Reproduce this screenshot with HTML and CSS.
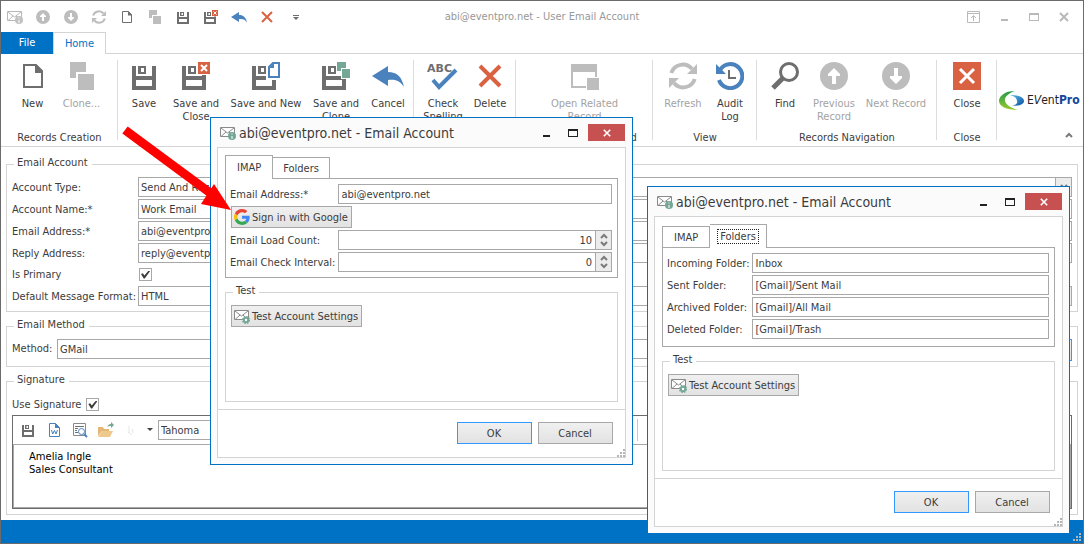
FILE: index.html
```html
<!DOCTYPE html>
<html lang="en">
<head>
  <meta charset="UTF-8" />
  <meta name="viewport" content="width=device-width, initial-scale=1" />
  <title>abi@eventpro.net - User Email Account</title>
  <link rel="stylesheet" href="styles.css">
</head>
<body>

<!-- icon set -->
<svg class="defs" aria-hidden="true">
  <defs>
    <linearGradient id="lg-green" x1="0" y1="0" x2="0" y2="1">
      <stop offset="0" stop-color="#1f9a4c"/><stop offset="1" stop-color="#9ccb2a"/>
    </linearGradient>
    <linearGradient id="lg-blue" x1="0" y1="0" x2="1" y2="1">
      <stop offset="0" stop-color="#5bc0ea"/><stop offset="1" stop-color="#0a4ea2"/>
    </linearGradient>
  </defs>
  <symbol id="i-up" viewBox="0 0 28 28">
    <circle cx="14" cy="14" r="14" fill="#bdbdbd"/>
    <path d="M14 6l6 6v2h-4v8h-4v-8H8v-2z" fill="#fff"/>
  </symbol>
  <symbol id="i-down" viewBox="0 0 28 28">
    <circle cx="14" cy="14" r="14" fill="#bdbdbd"/>
    <path d="M14 22l6-6v-2h-4V6h-4v8H8v2z" fill="#fff"/>
  </symbol>
  <symbol id="i-refresh" viewBox="0 0 28 28">
    <g fill="none" stroke="#bdbdbd" stroke-width="4">
      <path d="M2.300 11A12 12 0 0 1 23 7"/><path d="M25.700 17A12 12 0 0 1 5 21"/>
    </g>
    <path d="M28 2v10H18zM0 26V16h10z" fill="#bdbdbd"/>
  </symbol>
  <symbol id="i-new" viewBox="0 0 28 28">
    <path d="M5 3h12l6 6v16H5z" fill="#fff" stroke="#6e6e6e" stroke-width="2"/>
    <path d="M16 2l8 8v1h-8z" fill="#6e6e6e"/>
  </symbol>
  <symbol id="i-clone" viewBox="0 0 28 28">
    <path d="M2 0h16v10H8v6H2z" fill="#bdbdbd"/><path d="M10 12h16v16H10z" fill="#bdbdbd"/>
  </symbol>
  <symbol id="i-save" viewBox="0 0 28 28">
    <path fill="#6e6e6e" fill-rule="evenodd" d="M2 4h4v10h16V4h4v24H2zM6 18v6h16v-6zM8 4h8v8H8zM11 6v4h3V6z"/>
  </symbol>
  <symbol id="i-saveclose" viewBox="0 0 28 28">
    <path fill="#6e6e6e" fill-rule="evenodd" d="M0 4h4v10h16V4h4v24H0zM4 18v6h16v-6zM6 4h8v8H6zM9 6v4h3V6z"/>
    <path d="M15 0h13v13H15z" fill="#fff"/><path d="M16 0h12v12H16z" fill="#d96243"/>
    <path d="M19 3l6 6m0-6l-6 6" stroke="#fff" stroke-width="2"/>
  </symbol>
  <symbol id="i-savenew" viewBox="0 0 28 28">
    <path fill="#6e6e6e" fill-rule="evenodd" d="M0 4h4v10h16V4h4v24H0zM4 18v6h16v-6zM6 4h8v8H6zM9 6v4h3V6z"/>
    <path d="M14 0h14v18H14z" fill="#fff"/>
    <path d="M21 1h6v14H17V5z" fill="#fff" stroke="#4a82bd" stroke-width="2"/><path d="M22 1v5h-5z" fill="#4a82bd"/>
  </symbol>
  <symbol id="i-saveclone" viewBox="0 0 28 28">
    <path fill="#6e6e6e" fill-rule="evenodd" d="M0 4h4v10h16V4h4v24H0zM4 18v6h16v-6zM6 4h8v8H6zM9 6v4h3V6z"/>
    <path d="M14 0h14v17h-9v-7h-5z" fill="#fff"/>
    <path d="M15 0h9v6h-5v3h-4zM20 7h8v9h-8z" fill="#74a795"/>
  </symbol>
  <symbol id="i-undo" viewBox="0 0 32 28">
    <path d="M0 14L16 4v6c9 0 14 5 16 15-4-6-8-8-16-7v6z" fill="#4a82bd"/>
  </symbol>
  <symbol id="i-delete" viewBox="0 0 28 28">
    <path d="M4 4l20 20M24 4L4 24" stroke="#d96243" stroke-width="4"/>
  </symbol>
  <symbol id="i-related" viewBox="0 0 28 28">
    <path fill="#bdbdbd" fill-rule="evenodd" d="M0 2h26v13h-2v-5H2v14h13v2H0z"/><path d="M16 16h12v12H16z" fill="#bdbdbd"/>
  </symbol>
  <symbol id="i-audit" viewBox="0 0 28 28">
    <path d="M4 8a12 12 0 1 1-1 10" fill="none" stroke="#4a82bd" stroke-width="4"/>
    <path d="M0 2v10h10z" fill="#4a82bd"/><path d="M13 8v8h7" fill="none" stroke="#6e6e6e" stroke-width="2"/>
  </symbol>
  <symbol id="i-find" viewBox="0 0 28 28">
    <circle cx="18" cy="10" r="8.500" fill="#fff" stroke="#6e6e6e" stroke-width="3"/>
    <path d="M12 16L2 26" stroke="#6e6e6e" stroke-width="5"/>
  </symbol>
  <symbol id="i-close" viewBox="0 0 28 28">
    <path d="M0 0h28v28H0z" fill="#d96243"/><path d="M7 7l14 14M21 7L7 21" stroke="#fff" stroke-width="3"/>
  </symbol>
  <symbol id="i-mail" viewBox="0 0 16 16">
    <path d="M.500 2.500h14v9H.500z" fill="#fff" stroke="#8a8a8a"/>
    <path d="M1 3l6.500 5L14 3M1 11.500l5-4.500m8 4.500L9 7" fill="none" stroke="#8a8a8a"/>
    <circle cx="12" cy="11" r="4" fill="#74a795"/><path d="M11.500 8.500h1v1h-1zM11.500 11h1v3h-1z" fill="#fff"/>
  </symbol>
  <symbol id="i-mailgear" viewBox="0 0 16 16">
    <path d="M.500 2.500h14v9H.500z" fill="#fff" stroke="#8a8a8a"/>
    <path d="M1 3l6.500 5L14 3M1 11.500l5-4.500m8 4.500L9 7" fill="none" stroke="#8a8a8a"/>
    <circle cx="12" cy="12" r="2.200" fill="#fff" stroke="#74a795" stroke-width="2"/>
    <circle cx="12" cy="12" r="3.400" fill="none" stroke="#74a795" stroke-width="1.500" stroke-dasharray="1.400 1.270"/>
  </symbol>
  <symbol id="i-google" viewBox="0 0 48 48">
    <path fill="#ea4335" d="M24 9.500c3.540 0 6.710 1.220 9.210 3.600l6.850-6.850C35.900 2.380 30.470 0 24 0 14.620 0 6.510 5.380 2.560 13.220l7.980 6.190C12.430 13.720 17.740 9.500 24 9.500z"/>
    <path fill="#4285f4" d="M46.980 24.550c0-1.570-.15-3.090-.38-4.550H24v9.020h12.940c-.58 2.960-2.260 5.480-4.780 7.180l7.730 6c4.510-4.180 7.090-10.360 7.090-17.650z"/>
    <path fill="#fbbc05" d="M10.530 28.590c-.48-1.450-.76-2.990-.76-4.590s.27-3.140.76-4.590l-7.980-6.190C.92 16.460 0 20.120 0 24s.92 7.540 2.560 10.780z"/>
    <path fill="#34a853" d="M24 48c6.480 0 11.930-2.130 15.890-5.810l-7.730-6c-2.150 1.450-4.920 2.300-8.160 2.300-6.260 0-11.570-4.220-13.470-9.910l-7.980 6.190C6.510 42.620 14.620 48 24 48z"/>
  </symbol>
  <symbol id="i-grip" viewBox="0 0 8 8">
    <path fill="#b5b5b5" d="M6 0h2v2H6zM3 3h2v2H3zM6 3h2v2H6zM0 6h2v2H0zM3 6h2v2H3zM6 6h2v2H6z"/>
  </symbol>
  <symbol id="i-chevup" viewBox="0 0 8 6"><path d="M1 5l3-3 3 3" fill="none" stroke="#7a7a7a" stroke-width="2"/></symbol>
  <symbol id="i-chevdown" viewBox="0 0 8 6"><path d="M1 1l3 3 3-3" fill="none" stroke="#7a7a7a" stroke-width="2"/></symbol>
  <symbol id="i-min" viewBox="0 0 10 10"><path d="M2 7h7v2H2z" fill="currentColor"/></symbol>
  <symbol id="i-max" viewBox="0 0 10 10"><path fill="currentColor" fill-rule="evenodd" d="M0 1h10v8H0zM1 3v5h8V3z"/></symbol>
  <symbol id="i-x" viewBox="0 0 10 10"><path d="M1 1l8 8M9 1L1 9" stroke="currentColor" stroke-width="2"/></symbol>
</svg>

<div class="window">
  <header class="titlebar">
    <div class="quick">
      <button aria-label="Account"><svg class="faded"><use href="#i-mail"/></svg></button>
      <button aria-label="Previous"><svg><use href="#i-up"/></svg></button>
      <button aria-label="Next"><svg><use href="#i-down"/></svg></button>
      <button aria-label="Refresh"><svg><use href="#i-refresh"/></svg></button>
      <button aria-label="New"><svg><use href="#i-new"/></svg></button>
      <button aria-label="Clone"><svg><use href="#i-clone"/></svg></button>
      <button aria-label="Save"><svg><use href="#i-save"/></svg></button>
      <button aria-label="Save and Close"><svg><use href="#i-saveclose"/></svg></button>
      <button aria-label="Cancel"><svg class="back"><use href="#i-undo"/></svg></button>
      <button aria-label="Delete"><svg><use href="#i-delete"/></svg></button>
      <button aria-label="Customize"><svg viewBox="0 0 14 14"><path d="M5 5h6v1H5zM5 7h6L8 10z" fill="#6e6e6e"/></svg></button>
    </div>
    <h1>abi@eventpro.net - User Email Account</h1>
    <div class="sysbuttons">
      <button aria-label="Ribbon options"><svg viewBox="0 0 14 12"><path d="M.500.500h12v11H.500zM.500 2.500h12M6.500 10V5M4 7l2.500-2.500L9 7" fill="none" stroke="currentColor"/></svg></button>
      <button aria-label="Minimize"><svg class="sys"><use href="#i-min"/></svg></button>
      <button aria-label="Maximize"><svg class="sys"><use href="#i-max"/></svg></button>
      <button aria-label="Close window"><svg class="sys"><use href="#i-x"/></svg></button>
    </div>
  </header>

  <nav class="tabs">
    <a class="file" href="#">File</a>
    <a class="home" href="#">Home</a>
  </nav>

  <div class="ribbon">
    <section class="rgroup g-create">
      <div class="rbuttons">
        <button class="w44"><svg><use href="#i-new"/></svg>New</button>
        <button class="w54" disabled><svg><use href="#i-clone"/></svg>Clone...</button>
      </div>
      <h2>Records Creation</h2>
    </section>
    <section class="rgroup g-save">
      <div class="rbuttons">
        <button class="w50"><svg><use href="#i-save"/></svg>Save</button>
        <button class="w54"><svg><use href="#i-saveclose"/></svg>Save and<br>Close</button>
        <button class="w86"><svg><use href="#i-savenew"/></svg>Save and New</button>
        <button class="w54"><svg><use href="#i-saveclone"/></svg>Save and<br>Clone</button>
        <button class="w50"><svg class="wide"><use href="#i-undo"/></svg>Cancel</button>
      </div>
    </section>
    <section class="rgroup g-edit">
      <div class="rbuttons">
        <button class="w50">
          <svg class="wide" viewBox="0 0 32 28">
            <text x="0" y="10" class="abc">ABC</text>
            <path d="M6 18l6 7L29 8" fill="none" stroke="#4a82bd" stroke-width="4"/>
          </svg>Check<br>Spelling
        </button>
        <button class="w44"><svg><use href="#i-delete"/></svg>Delete</button>
      </div>
    </section>
    <section class="rgroup g-related">
      <div class="rbuttons">
        <button class="w86" disabled><svg><use href="#i-related"/></svg>Open Related<br>Record</button>
      </div>
      <h2>Open Related Record</h2>
    </section>
    <section class="rgroup g-view">
      <div class="rbuttons">
        <button class="w50" disabled><svg><use href="#i-refresh"/></svg>Refresh</button>
        <button class="w44"><svg><use href="#i-audit"/></svg>Audit<br>Log</button>
      </div>
      <h2>View</h2>
    </section>
    <section class="rgroup g-nav">
      <div class="rbuttons">
        <button class="w44"><svg><use href="#i-find"/></svg>Find</button>
        <button class="w54" disabled><svg><use href="#i-up"/></svg>Previous<br>Record</button>
        <button class="w70" disabled><svg><use href="#i-down"/></svg>Next Record</button>
      </div>
      <h2>Records Navigation</h2>
    </section>
    <section class="rgroup g-close">
      <div class="rbuttons">
        <button class="w54"><svg><use href="#i-close"/></svg>Close</button>
      </div>
      <h2>Close</h2>
    </section>
    <div class="logo">
      <svg viewBox="0 0 25 19">
        <path d="M16 0C6 0 0 5 0 10c0 5 7 9 19 9C12 17 7 14 6 10s4-8 10-10z" fill="url(#lg-green)"/>
        <path d="M11 4c8 0 14 2 14 6 0 3-4 5-12 5 4-1 6-3 5-5 0-3-3-5-7-6z" fill="url(#lg-blue)"/>
      </svg>
      <span>E<i>V</i>ent<b>Pro</b></span>
    </div>
    <button class="collapse" aria-label="Collapse ribbon"><svg><use href="#i-chevup"/></svg></button>
  </div>

  <main>
    <fieldset class="account">
      <legend>Email Account</legend>
      <label for="type">Account Type:</label>
      <div class="combo"><select id="type"><option>Send And Receive</option></select><span class="drop"><svg><use href="#i-chevdown"/></svg></span></div>
      <label for="name">Account Name:*</label>
      <input id="name" type="text" value="Work Email">
      <label for="email">Email Address:*</label>
      <input id="email" type="text" value="abi@eventpro.net">
      <label for="reply">Reply Address:</label>
      <input id="reply" type="text" value="reply@eventpro.net">
      <label for="primary">Is Primary</label>
      <input id="primary" type="checkbox" checked>
      <label for="format">Default Message Format:</label>
      <div class="combo"><select id="format"><option>HTML</option></select><span class="drop"><svg><use href="#i-chevdown"/></svg></span></div>
    </fieldset>

    <fieldset class="method">
      <legend>Email Method</legend>
      <label for="method">Method:</label>
      <div class="combo"><select id="method"><option>GMail</option></select></div>
      <button class="btn primary" aria-label="Method settings"></button>
    </fieldset>

    <fieldset class="signature">
      <legend>Signature</legend>
      <div class="use">
        <label for="usesig">Use Signature</label>
        <input id="usesig" type="checkbox" checked>
      </div>
      <div class="editor">
        <div class="toolbar">
          <button aria-label="Save"><svg><use href="#i-save"/></svg></button>
          <button aria-label="Open in Word"><svg viewBox="0 0 16 16"><path d="M3.500 1.500h6l4 4v9h-10z" fill="#fff" stroke="#4a82bd"/><path d="M9 1v5h5z" fill="#4a82bd"/><path d="M5.500 8l1.200 4L8.500 8.500l1.500 3.500L11.500 8" fill="none" stroke="#4a82bd"/></svg></button>
          <button aria-label="Preview"><svg viewBox="0 0 16 16"><path d="M1.500 1.500h12v12h-12z" fill="#fff" stroke="#8a8a8a"/><path d="M3 4.500h9M3 6.500h3M3 8.500h2M3 10.500h3" stroke="#6e6e6e"/><circle cx="9.500" cy="9.500" r="3" fill="#fff" stroke="#4a82bd"/><path d="M12 12l3 3" stroke="#4a82bd" stroke-width="2"/></svg></button>
          <button aria-label="Open"><svg viewBox="0 0 16 16"><path d="M0 14V5h5l1 2h5v2H4z" fill="#e3b876"/><path d="M4 9h11l-3 6H0z" fill="#efc98c"/><path d="M9 5c1-2 2-3 4-3V0l3 3-3 3V4c-2 0-3 0-4 1z" fill="#74a795"/></svg></button>
          <button class="pen" aria-label="Pen"><svg viewBox="0 0 16 16"><path d="M5 4v7M8 7l1 4M4 10l4 3" stroke="#e6e6e6" fill="none"/></svg></button>
          <button class="more" aria-label="More"><svg viewBox="0 0 6 4"><path d="M0 0h6L3 3z" fill="#444"/></svg></button>
          <div class="combo font"><select aria-label="Font"><option>Tahoma</option></select></div>
          <span class="sep"></span>
        </div>
        <div class="text" contenteditable="true">Amelia Ingle<br>Sales Consultant</div>
      </div>
    </fieldset>
  </main>

  <footer class="status"><svg class="grip"><use href="#i-grip"/></svg></footer>
</div>

<div class="dialog first" role="dialog" aria-label="Email Account, IMAP">
  <div class="dtitle">
    <svg><use href="#i-mail"/></svg>
    <h2>abi@eventpro.net - Email Account</h2>
    <button aria-label="Minimize"><svg class="sys"><use href="#i-min"/></svg></button>
    <button aria-label="Maximize"><svg class="sys"><use href="#i-max"/></svg></button>
    <button class="x" aria-label="Close"><svg class="sys"><use href="#i-x"/></svg></button>
  </div>
  <div class="panel">
    <div class="dtabs">
      <button class="active">IMAP</button><button>Folders</button>
    </div>
    <div class="page">
      <label for="addr">Email Address:*</label>
      <input id="addr" type="text" value="abi@eventpro.net">
      <button class="btn google"><svg><use href="#i-google"/></svg>Sign in with Google</button>
      <label for="load">Email Load Count:</label>
      <div class="spin"><input id="load" type="number" value="10"><span class="drop"><svg><use href="#i-chevup"/></svg><svg><use href="#i-chevdown"/></svg></span></div>
      <label for="interval">Email Check Interval:</label>
      <div class="spin"><input id="interval" type="number" value="0"><span class="drop"><svg><use href="#i-chevup"/></svg><svg><use href="#i-chevdown"/></svg></span></div>
    </div>
    <fieldset class="test">
      <legend>Test</legend>
      <button class="btn"><svg><use href="#i-mailgear"/></svg>Test Account Settings</button>
    </fieldset>
    <div class="actions">
      <button class="btn primary">OK</button>
      <button class="btn">Cancel</button>
      <svg class="grip"><use href="#i-grip"/></svg>
    </div>
  </div>
</div>

<div class="dialog second" role="dialog" aria-label="Email Account, Folders">
  <div class="dtitle">
    <svg><use href="#i-mail"/></svg>
    <h2>abi@eventpro.net - Email Account</h2>
    <button aria-label="Minimize"><svg class="sys"><use href="#i-min"/></svg></button>
    <button aria-label="Maximize"><svg class="sys"><use href="#i-max"/></svg></button>
    <button class="x" aria-label="Close"><svg class="sys"><use href="#i-x"/></svg></button>
  </div>
  <div class="panel">
    <div class="dtabs">
      <button>IMAP</button><button class="active"><span class="focus">Folders</span></button>
    </div>
    <div class="page">
      <label for="inbox">Incoming Folder:</label>
      <input id="inbox" type="text" value="Inbox">
      <label for="sent">Sent Folder:</label>
      <input id="sent" type="text" value="[Gmail]/Sent Mail">
      <label for="archived">Archived Folder:</label>
      <input id="archived" type="text" value="[Gmail]/All Mail">
      <label for="deleted">Deleted Folder:</label>
      <input id="deleted" type="text" value="[Gmail]/Trash">
    </div>
    <fieldset class="test">
      <legend>Test</legend>
      <button class="btn"><svg><use href="#i-mailgear"/></svg>Test Account Settings</button>
    </fieldset>
    <div class="actions">
      <button class="btn primary">OK</button>
      <button class="btn">Cancel</button>
      <svg class="grip"><use href="#i-grip"/></svg>
    </div>
  </div>
</div>

<!-- callout arrow pointing at the sign in button -->
<svg class="arrow" viewBox="0 0 110 84" aria-hidden="true">
  <path d="M4 4L92 69" stroke="#f00" stroke-width="9"/>
  <path d="M110 84L80 78L93 58z" fill="#f00"/>
</svg>

</body>
</html>
```
FILE: styles.css
```css
* {
  box-sizing: border-box;
}
body {
  margin: 0;
  font-family: Tahoma, "DejaVu Sans Condensed", "Noto Sans", sans-serif;
  font-size: 11px;
  line-height: 13px;
  color: #3c3c3c;
  background: #fff;
}
button, input, select {
  font: inherit;
  color: inherit;
}
button {
  padding: 0;
  border: 0;
  background: none;
}
h1, h2 {
  margin: 0;
  font-weight: normal;
  font-size: 11px;
}
svg {
  display: block;
  flex: none;
  width: 14px;
  height: 14px;
}
.defs {
  position: absolute;
  width: 0;
  height: 0;
}
.abc {
  font-family: "DejaVu Sans", sans-serif;
  font-size: 11px;
  font-weight: bold;
  fill: #6e6e6e;
}

/* main window */
.window {
  display: flex;
  flex-direction: column;
  min-height: 100vh;
  border: 1px solid #6b6b6b;
}
.titlebar {
  display: grid;
  grid-template-columns: 1fr auto 1fr;
  align-items: center;
  height: 31px;
}
.titlebar h1 {
  color: #999;
}
.quick, .sysbuttons {
  display: flex;
}
.quick button {
  display: flex;
  align-items: center;
  justify-content: center;
  width: 28px;
}
.quick .faded {
  width: 16px;
  height: 16px;
  filter: grayscale(1);
  opacity: 0.6;
}
.quick .back {
  width: 16px;
}
.sysbuttons {
  justify-content: flex-end;
  padding-right: 4px;
  color: #b9b9b9;
}
.sysbuttons button {
  display: flex;
  justify-content: center;
  align-items: center;
  width: 30px;
}
.sys {
  width: 10px;
  height: 10px;
}
.tabs {
  display: flex;
  height: 22px;
  border-bottom: 1px solid #d4d4d4;
}
.tabs a {
  height: 22px;
  line-height: 22px;
  text-align: center;
  text-decoration: none;
}
.file {
  width: 52px;
  background: #0072c6;
  color: #fff;
}
.home {
  width: 53px;
  border: 1px solid #d4d4d4;
  border-bottom: 0;
  background: #fff;
  color: #0072c6;
}

/* ribbon */
.ribbon {
  position: relative;
  display: flex;
  height: 93px;
  padding: 6px 0 2px;
  border-bottom: 1px solid #d4d4d4;
}
.rgroup {
  position: relative;
  display: flex;
  flex-direction: column;
  justify-content: space-between;
  flex: none;
}
.rgroup::after {
  content: "";
  position: absolute;
  top: 0;
  right: 0;
  bottom: 4px;
  width: 1px;
  background: #dcdcdc;
}
.rgroup h2 {
  text-align: center;
}
.rbuttons {
  display: flex;
  align-items: flex-start;
  justify-content: center;
  padding-top: 2px;
}
.rbuttons button {
  display: block;
  white-space: nowrap;
}
.rbuttons button:disabled {
  color: #a3a3a3;
}
.rbuttons svg {
  width: 28px;
  height: 28px;
  margin: 0 auto 7px;
}
.rbuttons .wide {
  width: 32px;
}
.w44 { width: 44px; }
.w50 { width: 50px; }
.w54 { width: 54px; }
.w70 { width: 70px; }
.w86 { width: 86px; }
.g-create { width: 117px; }
.g-save { width: 296px; }
.g-edit { width: 102px; }
.g-related { width: 137px; }
.g-view { width: 104px; }
.g-nav { width: 180px; }
.g-close { width: 60px; }
.logo {
  display: flex;
  align-items: center;
  padding: 0 0 4px 2px;
  font-size: 12px;
  color: #222;
}
.logo svg {
  width: 25px;
  height: 19px;
  margin-right: 3px;
}
.logo b {
  color: #14479b;
}
.collapse {
  position: absolute;
  right: 10px;
  bottom: 8px;
}
.collapse svg {
  width: 8px;
  height: 6px;
}

/* form groups */
main {
  display: flex;
  flex: 1;
  flex-direction: column;
  gap: 7px;
  padding: 10px 5px 5px;
}
fieldset {
  min-width: 0;
  margin: 0;
  padding: 6px 5px 5px;
  border: 1px solid #d4d4d4;
}
legend {
  height: 14px;
  margin-left: 2px;
  padding: 0 4px 0 3px;
  line-height: 12px;
}
input, select {
  width: 100%;
  min-width: 0;
  height: 20px;
  margin: 0;
  padding: 0 3px 0 2px;
  border: 1px solid #a8a8a8;
  border-radius: 0;
  background: #fff;
  outline: 0;
  appearance: none;
}
input[type="number"] {
  appearance: textfield;
  text-align: right;
}
input[type="number"]::-webkit-inner-spin-button {
  display: none;
}
input[type="checkbox"] {
  display: grid;
  place-items: center;
  width: 13px;
  height: 13px;
  margin: 3px 1px;
  padding: 0;
}
input[type="checkbox"]::before {
  content: "";
  width: 9px;
  height: 8px;
  background: #3c3c3c;
  clip-path: polygon(0 45%, 20% 35%, 38% 62%, 85% 0, 100% 10%, 42% 100%, 30% 100%);
}
.account {
  display: grid;
  grid-template-columns: 124px 1fr;
  gap: 2px;
  align-items: center;
}
.account label {
  white-space: nowrap;
}
.combo, .spin {
  display: flex;
  flex: 1;
}
.drop {
  display: flex;
  flex: none;
  flex-direction: column;
  align-items: center;
  justify-content: space-evenly;
  width: 16px;
  border: 1px solid #a8a8a8;
  border-left: 0;
  background: #ececec;
}
.drop svg {
  width: 8px;
  height: 6px;
}
.btn {
  display: inline-flex;
  align-items: center;
  justify-content: center;
  height: 22px;
  padding: 0 3px 0 2px;
  border: 1px solid #a8a8a8;
  background: linear-gradient(#f0f0f0, #e2e2e2);
}
.btn svg {
  width: 16px;
  height: 16px;
  margin-right: 2px;
}
.primary {
  border-color: #3399ff;
}
.method {
  display: flex;
}
.method label {
  width: 45px;
  line-height: 20px;
}
.method .btn {
  width: 75px;
  margin-left: 6px;
}
.signature {
  flex: 1;
}
.use {
  display: flex;
  align-items: center;
  gap: 4px;
  height: 21px;
}
.editor {
  display: flex;
  flex-direction: column;
  min-height: 94px;
  border: 1px solid #6b6b6b;
}
.toolbar {
  display: flex;
  align-items: center;
  height: 28px;
  padding-left: 2px;
}
.toolbar button {
  display: flex;
  justify-content: center;
  width: 26px;
}
.toolbar svg {
  width: 16px;
  height: 16px;
}
.toolbar button:first-child svg {
  width: 14px;
  height: 14px;
}
.toolbar .more {
  width: 10px;
  margin-right: 3px;
}
.toolbar .more svg {
  width: 6px;
  height: 4px;
}
.toolbar .font {
  flex: none;
  width: 160px;
}
.sep {
  width: 1px;
  height: 22px;
  margin-left: 319px;
  background: #c8c8c8;
}
.text {
  flex: 1;
  padding: 5px 15px;
  border: 1px solid #a8a8a8;
  border-right-width: 2px;
  font-family: Verdana, "DejaVu Sans", sans-serif;
  font-size: 10px;
  color: #000;
}
.status {
  display: flex;
  align-items: flex-end;
  justify-content: flex-end;
  height: 23px;
  padding: 2px;
  background: #0072c6;
}
.grip {
  width: 8px;
  height: 8px;
}

/* floating dialogs */
.dialog {
  position: absolute;
  width: 423px;
  padding: 0 6px 6px;
  border: 1px solid #0072c6;
  background: #fbfbfb;
}
.first {
  left: 210px;
  top: 117px;
}
.second {
  left: 647px;
  top: 186px;
}
.dtitle {
  display: flex;
  align-items: center;
  height: 29px;
  padding-left: 3px;
  color: #222;
}
.dtitle > svg {
  width: 16px;
  height: 16px;
}
.dtitle h2 {
  flex: 1;
  margin-left: 3px;
  font-size: 14px;
  line-height: 18px;
  color: #3c3c3c;
}
.dtitle button {
  display: flex;
  align-items: center;
  justify-content: center;
  width: 27px;
  height: 17px;
}
.dtitle .x {
  width: 37px;
  margin: 0 1px 0 2px;
  background: #c75050;
  color: #fff;
}
.dtitle .x svg {
  width: 8px;
  height: 8px;
}
.panel {
  border: 1px solid #d4d4d4;
  background: #fff;
}
.dtabs {
  display: flex;
  align-items: flex-end;
  height: 24px;
  margin: 7px 7px -1px;
}
.dtabs button {
  position: relative;
  height: 22px;
  padding: 0 11px;
  border: 1px solid #a8a8a8;
}
.dtabs button + button {
  padding: 0 10px;
  border-left: 0;
}
.dtabs .active {
  height: 24px;
  border-bottom: 0;
  background: #fff;
}
.dtabs button + .active {
  padding: 0 8px;
}
.focus {
  padding: 0 2px;
  outline: 1px dotted #222;
}
.page {
  display: grid;
  grid-template-columns: auto 1fr;
  gap: 2px 3px;
  align-items: center;
  align-content: start;
  min-height: 100px;
  margin: 0 7px 7px;
  padding: 5px 5px 5px 4px;
  border: 1px solid #a8a8a8;
}
.google {
  grid-column: 1 / -1;
  justify-self: start;
  margin-left: 1px;
}
.test {
  height: 117px;
  margin: 0 7px 7px;
}
.actions {
  position: relative;
  display: flex;
  gap: 6px;
  justify-content: flex-end;
  height: 48px;
  padding: 12px;
  border-top: 1px solid #d4d4d4;
}
.actions .btn {
  width: 75px;
}
.actions .grip {
  position: absolute;
  right: 0;
  bottom: 0;
}

.arrow {
  position: absolute;
  left: 121px;
  top: 126px;
  width: 110px;
  height: 84px;
  pointer-events: none;
}
```
